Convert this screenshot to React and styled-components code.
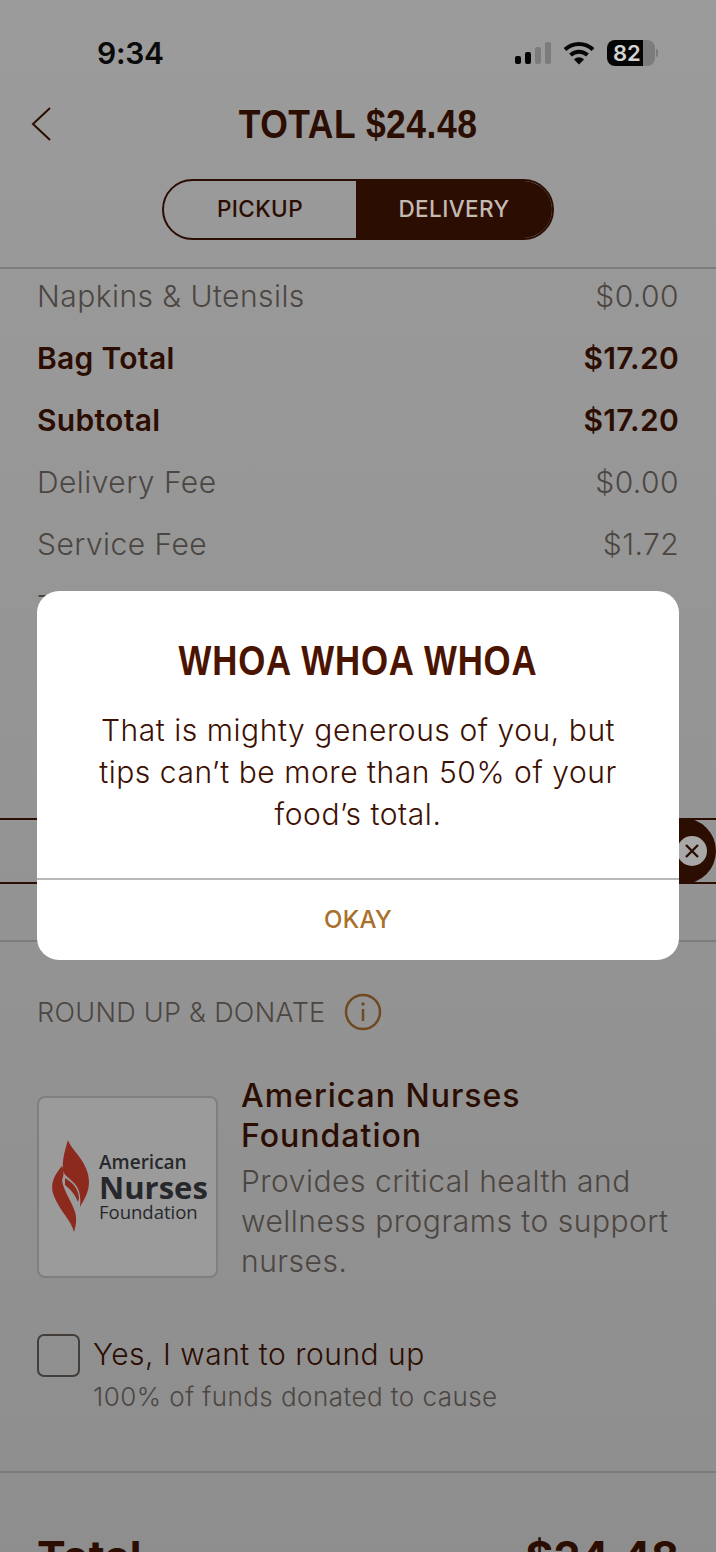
import React from 'react';
import styled, { createGlobalStyle } from 'styled-components';

const dark = '#2c0d02';
const muted = '#4c4642';
const line = '#7c7c7c';
const gotham = '"Inter", "Liberation Sans", sans-serif';
const din = '"Liberation Sans", sans-serif';

const GlobalStyle = createGlobalStyle`
  html, body { margin: 0; padding: 0; }
  body { font-family: ${gotham}; }
  * { box-sizing: border-box; }
`;

const Page = styled.div`
  position: relative;
  width: 716px;
  height: 1552px;
  overflow: hidden;
  background: linear-gradient(#9b9b9b, #8e8e8e);
  color: ${dark};
`;

const StatusBar = styled.div`
  height: 90px;
  padding: 35px 61px 0 97px;
  display: flex;
  justify-content: space-between;
`;

const Time = styled.div`
  font: 600 30px/36px "Inter", sans-serif;
  color: #0a0a0a;
  letter-spacing: -0.3px;
`;

const StatusIcons = styled.div`
  display: flex;
  align-items: center;
  height: 36px;
  gap: 12px;
`;

const Battery = styled.div`
  position: relative;
  width: 48px;
  height: 26px;
  border-radius: 8px;
  background: linear-gradient(90deg, #050505 76%, #7c7c7c 76%);
  color: #d4d4d4;
  font: 600 22px/26px "Inter", sans-serif;
  padding-left: 6px;
  &::after {
    content: '';
    position: absolute;
    right: -3px;
    top: 9px;
    width: 2px;
    height: 8px;
    border-radius: 0 2px 2px 0;
    background: #7c7c7c;
  }
`;

const Header = styled.div`
  position: relative;
  height: 68px;
  display: flex;
  align-items: center;
  justify-content: center;
`;

const BackIcon = styled.svg`
  position: absolute;
  left: 31px;
  top: 16px;
`;

const Title = styled.h1`
  margin: 0;
  font: 700 41px/68px ${din};
  color: ${dark};
  letter-spacing: 0.6px;
  transform: scaleX(0.865);
`;

const ToggleWrap = styled.div`
  display: flex;
  justify-content: center;
  padding: 21px 0 27px;
  border-bottom: 2px solid ${line};
`;

const Toggle = styled.div`
  display: flex;
  width: 392px;
  height: 61px;
  border: 2px solid ${dark};
  border-radius: 31px;
  overflow: hidden;
`;

const ToggleItem = styled.div`
  flex: ${(p) => (p.$active ? '0 0 196px' : '1')};
  display: flex;
  align-items: center;
  justify-content: center;
  padding-bottom: 1px;
  font: 500 22.5px/1 ${gotham};
  letter-spacing: 0.4px;
  background: ${(p) => (p.$active ? dark : 'transparent')};
  color: ${(p) => (p.$active ? '#c4bab2' : dark)};
`;

const Rows = styled.div`
  margin-top: -4px;
  padding: 0 37px;
`;

const Row = styled.div`
  height: 62px;
  display: flex;
  align-items: center;
  justify-content: space-between;
  font: ${(p) => (p.$strong ? 600 : 300)} 30px/1 ${gotham};
  letter-spacing: ${(p) => (p.$strong ? '0.3px' : '0.45px')};
  color: ${(p) => (p.$strong ? dark : muted)};
`;

const TipBar = styled.div`
  display: flex;
  justify-content: flex-end;
  align-items: center;
  height: 66px;
  margin-top: 181px;
  border-top: 2px solid ${dark};
  border-bottom: 2px solid ${dark};
`;

const TipClear = styled.div`
  width: 200px;
  height: 66px;
  margin: -2px 0;
  padding-right: 9px;
  border-radius: 0 33px 33px 0;
  background: ${dark};
  display: flex;
  align-items: center;
  justify-content: flex-end;
`;

const ClearDot = styled.div`
  width: 30px;
  height: 30px;
  border-radius: 50%;
  background: #a8a8a8;
  display: flex;
  align-items: center;
  justify-content: center;
`;

const Donate = styled.section`
  margin-top: 56px;
  padding: 0 37px;
  border-top: 2px solid ${line};
  height: 531px;
`;

const DonateHead = styled.div`
  display: flex;
  align-items: center;
  gap: 19px;
  height: 38px;
  margin-top: 51px;
  font: 300 27px/1 ${gotham};
  letter-spacing: 0.3px;
  color: ${muted};
`;

const Charity = styled.div`
  display: flex;
  gap: 23px;
  margin-top: 64px;
`;

const LogoCard = styled.div`
  flex: 0 0 181px;
  height: 182px;
  margin-top: 1px;
  border: 2px solid #7f7f7f;
  border-radius: 8px;
  background: #9b9b9b;
  display: flex;
  align-items: center;
  gap: 9px;
  padding: 0 0 2px 12px;
`;

const LogoText = styled.div`
  display: flex;
  flex-direction: column;
  font-family: "Open Sans", sans-serif;
  color: #26282c;
`;

const LogoLine = styled.div`
  font-size: ${(p) => p.$size}px;
  font-weight: ${(p) => p.$weight};
  line-height: ${(p) => p.$height}px;
`;

const CharityInfo = styled.div`
  flex: 1;
  margin-top: -19px;
`;

const CharityName = styled.div`
  font: 500 32px/40px ${gotham};
  letter-spacing: 1px;
  color: ${dark};
`;

const CharityDesc = styled.div`
  margin-top: 5px;
  font: 300 30px/40px ${gotham};
  letter-spacing: 0.5px;
  color: ${muted};
`;

const Check = styled.div`
  display: flex;
  gap: 13px;
  margin-top: 53px;
`;

const Box = styled.div`
  width: 43px;
  height: 43px;
  border: 2px solid #443e3a;
  border-radius: 7px;
`;

const CheckLabel = styled.div`
  font: 300 30px/40px ${gotham};
  letter-spacing: 0.5px;
  color: ${dark};
`;

const CheckNote = styled.div`
  margin-top: 7px;
  font: 300 26px/1.2 ${gotham};
  letter-spacing: 0.45px;
  color: ${muted};
`;

const TotalRow = styled.div`
  padding: 62px 37px 0;
  display: flex;
  justify-content: space-between;
  border-top: 2px solid ${line};
  font: 700 43px/1 "Inter", sans-serif;
`;

const Overlay = styled.div`
  position: absolute;
  inset: 0;
  padding-bottom: 1px;
  display: flex;
  align-items: center;
  justify-content: center;
`;

const Modal = styled.div`
  width: 642px;
  height: 369px;
  border-radius: 22px;
  background: #fff;
  display: flex;
  flex-direction: column;
`;

const ModalBody = styled.div`
  flex: 1;
  padding-top: 41px;
  text-align: center;
  border-bottom: 2px solid #b8b8b8;
`;

const ModalTitle = styled.h2`
  margin: 0;
  font: 700 43px/56px ${din};
  color: #4a1400;
  letter-spacing: 1px;
  transform: scaleX(0.81);
`;

const ModalText = styled.p`
  margin: 21px 0 0;
  font: 300 30px/42px ${gotham};
  letter-spacing: 0.55px;
  color: #3c1002;
`;

const ModalAction = styled.div`
  height: 80px;
  display: flex;
  align-items: center;
  justify-content: center;
  font: 500 24px/1 ${gotham};
  letter-spacing: 0.3px;
  color: #a96f2c;
`;

function Flame() {
  return (
    <svg width="39" height="92" viewBox="0 0 39 92" fill="#8c2a1e">
      <path d="M17 0C20 10 38 22 38 42C38 52 33 60 29 67C30 58 29 50 24 44C19 38 13 36 12 30C11 20 14 10 17 0Z" />
      <path d="M11 26C13 31 13 35 11 40C12 50 20 60 24 72C26 78 25 86 23 92C20 80 8 70 3 56C-2 44 4 34 11 26Z" />
      <path d="M14 38C20 42 27 46 28 58L27 62C24 54 19 49 14 45Z" />
    </svg>
  );
}

function Wifi() {
  return (
    <svg width="32" height="24" viewBox="0 0 32 24">
      <path d="M2 8.5C10 1 22 1 30 8.5" fill="none" stroke="#050505" strokeWidth="4" />
      <path d="M7.5 14C12.5 9.5 19.5 9.5 24.5 14" fill="none" stroke="#050505" strokeWidth="4" />
      <path d="M11 18.5C14 15.5 18 15.5 21 18.5L16 23.5Z" fill="#050505" />
    </svg>
  );
}

function Signal() {
  const bars = [
    { x: 0, h: 8, c: '#050505' },
    { x: 10, h: 12, c: '#050505' },
    { x: 20, h: 17, c: '#7c7c7c' },
    { x: 30, h: 22, c: '#7c7c7c' },
  ];
  return (
    <svg width="36" height="24" viewBox="0 0 36 24">
      {bars.map((b) => (
        <rect key={b.x} x={b.x} y={23 - b.h} width="6" height={b.h} rx="2" fill={b.c} />
      ))}
    </svg>
  );
}

const fees = [
  { label: 'Napkins & Utensils', value: '$0.00' },
  { label: 'Bag Total', value: '$17.20', strong: true },
  { label: 'Subtotal', value: '$17.20', strong: true },
  { label: 'Delivery Fee', value: '$0.00' },
  { label: 'Service Fee', value: '$1.72' },
  { label: 'Tax', value: '' },
];

export default function App() {
  return (
    <Page>
      <GlobalStyle />
      <StatusBar>
        <Time>9:34</Time>
        <StatusIcons>
          <Signal />
          <Wifi />
          <Battery>82</Battery>
        </StatusIcons>
      </StatusBar>
      <Header>
        <BackIcon width="22" height="36" viewBox="0 0 22 36">
          <polyline points="19,2 2,18 19,34" fill="none" stroke={dark} strokeWidth="2" />
        </BackIcon>
        <Title>TOTAL $24.48</Title>
      </Header>
      <ToggleWrap>
        <Toggle>
          <ToggleItem>PICKUP</ToggleItem>
          <ToggleItem $active>DELIVERY</ToggleItem>
        </Toggle>
      </ToggleWrap>
      <Rows>
        {fees.map((f) => (
          <Row key={f.label} $strong={f.strong}>
            <span>{f.label}</span>
            <span>{f.value}</span>
          </Row>
        ))}
      </Rows>
      <TipBar>
        <TipClear>
          <ClearDot>
            <svg width="16" height="16" viewBox="0 0 16 16">
              <path d="M2 2L14 14M14 2L2 14" stroke={dark} strokeWidth="2.4" />
            </svg>
          </ClearDot>
        </TipClear>
      </TipBar>
      <Donate>
        <DonateHead>
          ROUND UP &amp; DONATE
          <svg width="38" height="38" viewBox="0 0 38 38">
            <circle cx="19" cy="19" r="17" fill="none" stroke="#6e4a22" strokeWidth="2.5" />
            <path d="M19 16V28" stroke="#6e4a22" strokeWidth="2.5" />
            <circle cx="19" cy="11" r="1.7" fill="#6e4a22" />
          </svg>
        </DonateHead>
        <Charity>
          <LogoCard>
            <Flame />
            <LogoText>
              <LogoLine $size={19} $weight={600} $height={22}>American</LogoLine>
              <LogoLine $size={31} $weight={700} $height={28}>Nurses</LogoLine>
              <LogoLine $size={18.5} $weight={400} $height={21}>Foundation</LogoLine>
            </LogoText>
          </LogoCard>
          <CharityInfo>
            <CharityName>American Nurses Foundation</CharityName>
            <CharityDesc>Provides critical health and wellness programs to support nurses.</CharityDesc>
          </CharityInfo>
        </Charity>
        <Check>
          <Box />
          <div>
            <CheckLabel>Yes, I want to round up</CheckLabel>
            <CheckNote>100% of funds donated to cause</CheckNote>
          </div>
        </Check>
      </Donate>
      <TotalRow>
        <span>Total</span>
        <span>$24.48</span>
      </TotalRow>
      <Overlay>
        <Modal>
          <ModalBody>
            <ModalTitle>WHOA WHOA WHOA</ModalTitle>
            <ModalText>
              That is mighty generous of you, but
              <br />
              tips can’t be more than 50% of your
              <br />
              food’s total.
            </ModalText>
          </ModalBody>
          <ModalAction>OKAY</ModalAction>
        </Modal>
      </Overlay>
    </Page>
  );
}
